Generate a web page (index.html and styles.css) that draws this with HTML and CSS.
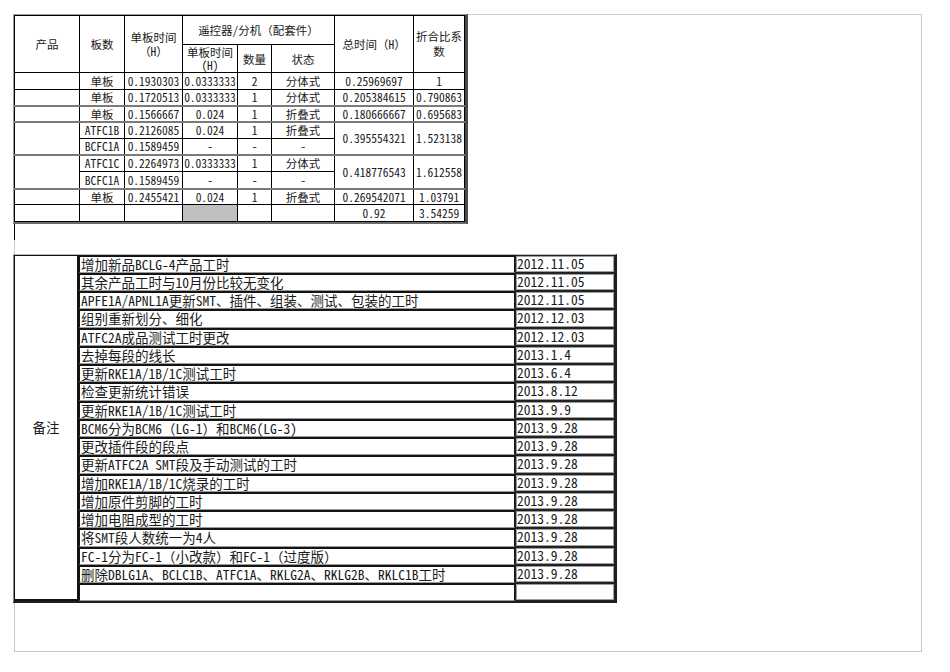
FILE: index.html
```html
<!DOCTYPE html>
<html lang="zh-CN">
<head>
<meta charset="utf-8">
<title>工时统计</title>
<link rel="stylesheet" href="styles.css">
</head>
<body>
<div class="page">
  <div class="frame">
    <div class="t1-wrap">
      <table class="t1">
        <colgroup>
          <col class="w65"><col class="w45"><col class="w58"><col class="w55"><col class="w34"><col class="w63"><col class="w79"><col class="w51">
        </colgroup>
        <tr class="h1">
          <td rowspan="2">产品</td>
          <td rowspan="2">板数</td>
          <td rowspan="2">单板时间<br>（H）</td>
          <td colspan="3">遥控器/分机（配套件）</td>
          <td rowspan="2">总时间（H）</td>
          <td rowspan="2" class="wrap">折合比系数</td>
        </tr>
        <tr class="h2">
          <td class="sub">单板时间<br>(H)</td>
          <td>数量</td>
          <td>状态</td>
        </tr>
        <tr class="r17">
          <td></td><td>单板</td><td>0.1930303</td><td>0.0333333</td><td>2</td><td>分体式</td><td>0.25969697</td><td>1</td>
        </tr>
        <tr class="r16">
          <td></td><td>单板</td><td>0.1720513</td><td>0.0333333</td><td>1</td><td>分体式</td><td>0.205384615</td><td>0.790863</td>
        </tr>
        <tr class="r16 sep">
          <td></td><td>单板</td><td>0.1566667</td><td>0.024</td><td>1</td><td>折叠式</td><td>0.180666667</td><td>0.695683</td>
        </tr>
        <tr class="r17 sep">
          <td rowspan="2"></td><td>ATFC1B</td><td>0.2126085</td><td>0.024</td><td>1</td><td>折叠式</td><td rowspan="2">0.395554321</td><td rowspan="2">1.523138</td>
        </tr>
        <tr class="r16">
          <td>BCFC1A</td><td>0.1589459</td><td>-</td><td>-</td><td>-</td>
        </tr>
        <tr class="r17 sep">
          <td rowspan="2"></td><td>ATFC1C</td><td>0.2264973</td><td>0.0333333</td><td>1</td><td>分体式</td><td rowspan="2">0.418776543</td><td rowspan="2">1.612558</td>
        </tr>
        <tr class="r17">
          <td>BCFC1A</td><td>0.1589459</td><td>-</td><td>-</td><td>-</td>
        </tr>
        <tr class="r16 sep">
          <td></td><td>单板</td><td>0.2455421</td><td>0.024</td><td>1</td><td>折叠式</td><td>0.269542071</td><td>1.03791</td>
        </tr>
        <tr class="r17">
          <td></td><td></td><td></td><td class="shade"></td><td></td><td></td><td>0.92</td><td>3.54259</td>
        </tr>
      </table>
    </div>
    <div class="tick"></div>
    <div class="t2-wrap">
      <table class="t2">
        <colgroup><col class="c-label"><col class="c-text"><col class="c-date"></colgroup>
        <tr><td rowspan="19" class="label">备注</td><td class="txt">增加新品BCLG-4产品工时</td><td class="date">2012.11.05</td></tr>
        <tr><td class="txt">其余产品工时与10月份比较无变化</td><td class="date">2012.11.05</td></tr>
        <tr><td class="txt">APFE1A/APNL1A更新SMT、插件、组装、测试、包装的工时</td><td class="date">2012.11.05</td></tr>
        <tr><td class="txt">组别重新划分、细化</td><td class="date">2012.12.03</td></tr>
        <tr><td class="txt">ATFC2A成品测试工时更改</td><td class="date">2012.12.03</td></tr>
        <tr><td class="txt">去掉每段的线长</td><td class="date">2013.1.4</td></tr>
        <tr><td class="txt">更新RKE1A/1B/1C测试工时</td><td class="date">2013.6.4</td></tr>
        <tr><td class="txt">检查更新统计错误</td><td class="date">2013.8.12</td></tr>
        <tr><td class="txt">更新RKE1A/1B/1C测试工时</td><td class="date">2013.9.9</td></tr>
        <tr><td class="txt">BCM6分为BCM6（LG-1）和BCM6(LG-3)</td><td class="date">2013.9.28</td></tr>
        <tr><td class="txt">更改插件段的段点</td><td class="date">2013.9.28</td></tr>
        <tr><td class="txt">更新ATFC2A SMT段及手动测试的工时</td><td class="date">2013.9.28</td></tr>
        <tr><td class="txt">增加RKE1A/1B/1C烧录的工时</td><td class="date">2013.9.28</td></tr>
        <tr><td class="txt">增加原件剪脚的工时</td><td class="date">2013.9.28</td></tr>
        <tr><td class="txt">增加电阻成型的工时</td><td class="date">2013.9.28</td></tr>
        <tr><td class="txt">将SMT段人数统一为4人</td><td class="date">2013.9.28</td></tr>
        <tr><td class="txt">FC-1分为FC-1（小改款）和FC-1（过度版）</td><td class="date">2013.9.28</td></tr>
        <tr><td class="txt">删除DBLG1A、BCLC1B、ATFC1A、RKLG2A、RKLG2B、RKLC1B工时</td><td class="date">2013.9.28</td></tr>
        <tr><td class="txt"></td><td class="date"></td></tr>
      </table>
    </div>
  </div>
</div>
</body>
</html>
```

FILE: styles.css
```css
* { box-sizing: border-box; }
html, body { margin: 0; padding: 0; background: #fff; }
body {
  font-family: "Noto Sans Mono CJK SC", "Liberation Serif", "Noto Sans CJK SC", serif;
  color: #1a1a1a;
}
.page { padding: 14px 0 0 14px; }
.frame {
  width: 908px;
  height: 638px;
  border: 1px solid #cbcbcb;
}

/* ---------- table 1 ---------- */
.t1-wrap {
  width: max-content;
  margin: -1px 0 0 -2px;
  border-left: 1px solid #a0a0a0;
  border-top: 1px solid #a0a0a0;
  border-right: 3px solid #4c4c4c;
  border-bottom: 2px solid #6c6c6c;
}
.t1 {
  border-collapse: collapse;
  table-layout: fixed;
  width: 450px;
  font-size: 11.5px;
}
.w65 { width: 65px; }
.w45 { width: 45px; }
.w58 { width: 58px; }
.w55 { width: 55px; }
.w34 { width: 34px; }
.w63 { width: 63px; }
.w79 { width: 79px; }
.w51 { width: 51px; }
.t1 td {
  border: 1px solid #000;
  padding: 0;
  text-align: center;
  vertical-align: middle;
  line-height: 14px;
  white-space: nowrap;
}
.t1 td.wrap { white-space: normal; line-height: 15px; padding: 0 1px; }
.t1 .h1 td { height: 29px; }
.t1 .h2 td { height: 28px; }
.t1 td.sub { line-height: 13px; }
.t1 .r17 td { height: 17px; }
.t1 .r16 td { height: 16px; }
.t1 tr.sep td { border-top: 2px solid #7a7a7a; }
.t1 td.shade { background: #c0c0c0; }

.tick {
  width: 1px;
  height: 16px;
  margin-left: -1px;
  background: #000;
}

/* ---------- table 2 ---------- */
.t2-wrap {
  width: max-content;
  margin: 14px 0 0 -2px;
  border-left: 1px solid #8a8a8a;
  border-top: 1px solid #bbbbbb;
  border-right: 2px solid #1e1e1e;
  border-bottom: 2px solid #1e1e1e;
}
.t2 {
  border-collapse: separate;
  border-spacing: 0;
  table-layout: fixed;
  width: 601px;
  font-size: 13.5px;
}
.c-label { width: 65px; }
.c-text { width: 436px; }
.c-date { width: 100px; }
.t2 tr { height: 18px; }
.t2 tr:nth-child(4n) { height: 19px; }
.t2 td {
  padding: 0;
  white-space: nowrap;
  line-height: 15px;
}
.t2 td.label {
  border: 1px solid #111;
  border-right: 2px solid #111;
  border-bottom: 2px solid #111;
  text-align: center;
  vertical-align: middle;
}
.t2 td.txt {
  border-top: 2px solid #141414;
  border-left: 1px solid #141414;
  border-right: 1px solid #141414;
  border-bottom: 1px solid #9a9a9a;
  padding: 0 1px;
  vertical-align: top;
}
.t2 td.date {
  border: 1px solid #222;
  box-shadow: inset 1px 1px 0 #9c9c9c, inset -1px -1px 0 #9c9c9c;
  padding: 0 1px;
  vertical-align: top;
}
```
